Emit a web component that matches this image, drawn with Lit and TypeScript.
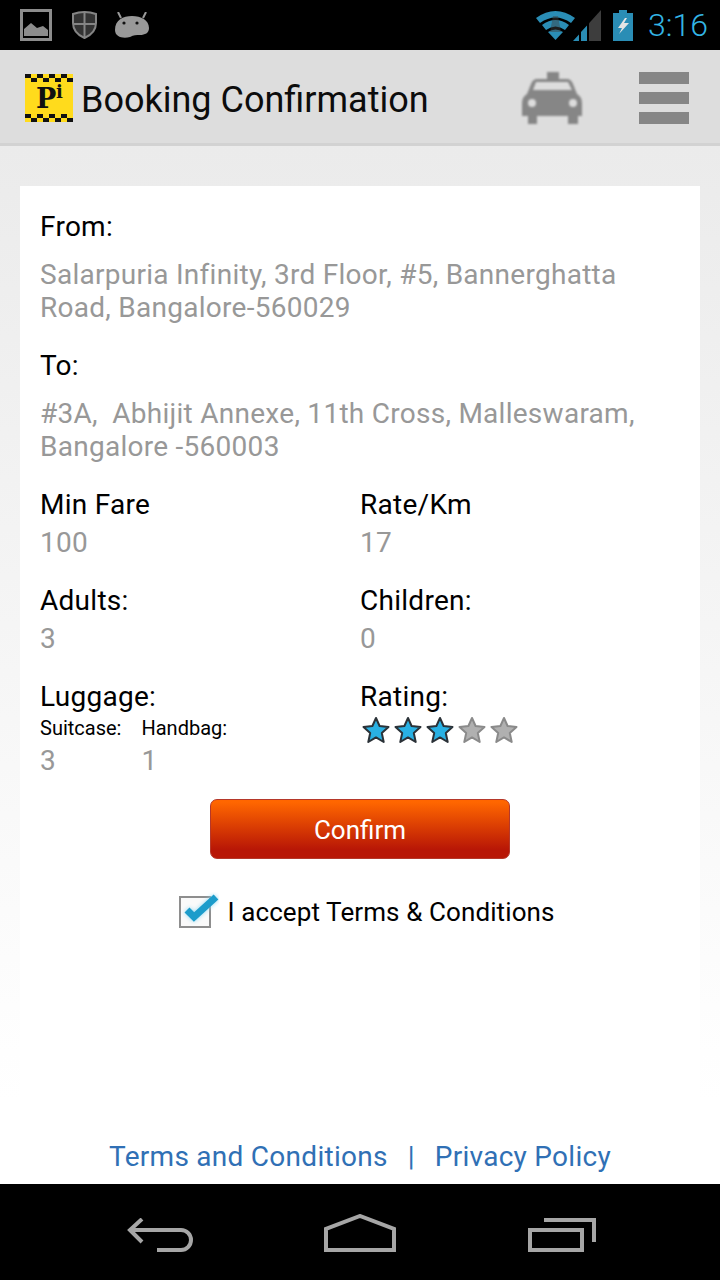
import { LitElement, html, css, svg } from "lit";
import { customElement } from "lit/decorators.js";

const star = (on: boolean) => svg`<svg class="star" viewBox="0 0 30 30" width="30" height="30">
  <path d="M15 3 L18.6 11 L27.5 12 L20.8 18 L22.7 27 L15 22.4 L7.3 27 L9.2 18 L2.5 12 L11.4 11 Z"
    fill="${on ? "#29b1e4" : "#b0b0b0"}" stroke="${on ? "#2b3238" : "#8a8a8a"}" stroke-width="2" stroke-linejoin="round"/>
</svg>`;

// two rows of taxi checks, used at the top and bottom of the logo
const checks = (y: number) =>
  [0, 1, 2, 3, 4, 5, 6, 7].map(
    (i) => svg`<rect x="${i * 6}" y="${i % 2 ? y + 4 : y}" width="6" height="4" fill="#111" />`
  );

@customElement("app-root")
export class AppRoot extends LitElement {
  static styles = css`
    :host {
      display: flex;
      flex-direction: column;
      width: 720px;
      height: 1280px;
      font-family: Roboto, "Liberation Sans", sans-serif;
      color: #000;
      overflow: hidden;
    }
    .status {
      height: 50px;
      background: #000;
      display: flex;
      align-items: center;
      flex: none;
    }
    .status .left {
      display: flex;
      align-items: center;
      padding-left: 20px;
    }
    .shield {
      margin-left: 20px;
    }
    .droid {
      margin-left: 18px;
    }
    .status .right {
      margin-left: auto;
      display: flex;
      align-items: center;
      padding-right: 12px;
    }
    .signal {
      margin-left: -2px;
    }
    .battery {
      margin-left: 12px;
    }
    .clock {
      color: #33b5e5;
      font-size: 32px;
      font-weight: 300;
      line-height: 50px;
      margin-left: 15px;
    }
    .bar {
      box-sizing: border-box;
      height: 96px;
      background: #dddddd;
      border-bottom: 3px solid #d2d2d2;
      display: flex;
      align-items: center;
      flex: none;
      padding: 3px 0 0 25px;
    }
    .title {
      font-size: 36px;
      margin: 4px 0 0 8px;
      color: #0c0c0c;
      white-space: nowrap;
    }
    .bar .taxi {
      margin-left: 93px;
      filter: blur(0.8px);
    }
    .bar .menu {
      margin-left: 57px;
      display: flex;
      flex-direction: column;
      gap: 8px;
    }
    .menu i {
      display: block;
      width: 50px;
      height: 12px;
      background: #868686;
    }
    .main {
      flex: 1;
      background: linear-gradient(#ebebeb, #ffffff 92%);
      padding: 40px 20px 0;
      display: flex;
      flex-direction: column;
      min-height: 0;
    }
    .card {
      background: #fff;
      flex: 1;
      padding: 24px 20px 0;
      display: flex;
      flex-direction: column;
    }
    .label {
      font-size: 28px;
      line-height: 33px;
      letter-spacing: 0.27px;
    }
    .value {
      font-size: 28px;
      line-height: 33px;
      letter-spacing: 0.27px;
      color: #989898;
    }
    .addr {
      margin-top: 15px;
      margin-bottom: 25px;
    }
    .grid {
      display: grid;
      grid-template-columns: 320px 1fr;
    }
    .cell {
      height: 96px;
    }
    .cell .value {
      margin-top: 5px;
    }
    .sub {
      display: flex;
      gap: 20px;
      font-size: 20px;
      line-height: 24px;
      margin-top: 3px;
    }
    .cell .sub .value {
      margin-top: 4px;
    }
    .stars {
      display: flex;
      margin: 2px 0 0 1px;
      gap: 2px;
    }
    .star {
      display: block;
      width: 30px;
      height: 30px;
    }
    .confirm {
      align-self: center;
      width: 300px;
      height: 60px;
      margin-top: 23px;
      box-sizing: border-box;
      border: 1px solid #b5382a;
      border-radius: 7px;
      background: linear-gradient(#ff6600 4%, #b81706 85%);
      color: #fff;
      font: inherit;
      font-size: 26px;
      padding: 2px 0 0;
    }
    .accept {
      align-self: center;
      display: flex;
      align-items: center;
      margin-top: 33px;
      margin-left: 14px;
      font-size: 26px;
      letter-spacing: 0.1px;
      line-height: 40px;
    }
    .check {
      display: block;
      margin-right: 8px;
    }
    .tick {
      filter: drop-shadow(0 0 2px #8fd8f2);
    }
    .links {
      margin-top: auto;
      padding-bottom: 9px;
      display: flex;
      justify-content: center;
      color: #3070b5;
      font-size: 28px;
      letter-spacing: 0.27px;
      line-height: 36px;
      white-space: nowrap;
    }
    .links .sep {
      margin: 0 20px;
    }
    .nav {
      height: 96px;
      background: #000;
      flex: none;
      display: flex;
      align-items: flex-start;
    }
    .nav svg {
      display: block;
      flex: none;
    }
    .back {
      margin: 34px 0 0 127px;
    }
    .home {
      margin: 30px 0 0 131px;
    }
    .recents {
      margin: 34px 0 0 132px;
    }
  `;

  render() {
    return html`
      <div class="status">
        <div class="left">
          <svg width="32" height="32" viewBox="0 0 32 32">
            <rect x="1.5" y="1.5" width="29" height="29" fill="none" stroke="#8c8c8c" stroke-width="3" />
            <path d="M4 27 V20 L11 14 L17 19 L23 17 L28 21 V27 Z" fill="#8c8c8c" />
          </svg>
          <svg class="shield" width="25" height="28" viewBox="0 0 25 28">
            <path d="M1 3 Q12.5 -1 24 3 V12 Q24 22 12.5 27 Q1 22 1 12 Z" fill="#333" stroke="#858585" stroke-width="2" />
            <path d="M12.5 1 V27 M1 13 H24" stroke="#858585" stroke-width="2" />
          </svg>
          <svg class="droid" width="34" height="26" viewBox="0 0 34 26">
            <path d="M3 0 L6 6 M31 0 L28 6" stroke="#999" stroke-width="2" />
            <path d="M0 18 C0 8 8 4 17 4 C26 4 34 8 34 16 C34 21 30 23 25 23 C21 23 19 23 15 25 C8 27 0 25 0 18 Z" fill="#999" />
            <circle cx="9" cy="11" r="1.6" fill="#111" />
            <circle cx="22" cy="11" r="1.6" fill="#111" />
          </svg>
        </div>
        <div class="right">
          <svg width="39" height="30" viewBox="0 0 39 30">
            <path d="M0 8 Q19.5 -6 39 8 L35 13 Q19.5 2 4 13 Z" fill="#2a8db5" />
            <path d="M6 15 Q19.5 5 33 15 L29 20 Q19.5 13 10 20 Z" fill="#2a8db5" />
            <path d="M12 22 Q19.5 17 27 22 L19.5 30 Z" fill="#2a8db5" />
            <path d="M17 6 H22 L25 22 H14 Z" fill="#3d3d3d" opacity="0.45" />
          </svg>
          <svg class="signal" width="28" height="31" viewBox="0 0 28 31">
            <path d="M0 31 L6 24.4 V31 Z M8 22.1 L14 15.5 V31 H8 Z" fill="#2a8db5" />
            <path d="M16 13.3 L28 0 V31 H16 Z" fill="#3d3d3d" />
          </svg>
          <svg class="battery" width="20" height="31" viewBox="0 0 20 31">
            <path d="M6 0 H14 V3 H20 V31 H0 V3 H6 Z" fill="#2a8db5" />
            <path d="M12 8 L5 18 H9 L6 24 L16 13 H11 L14 8 Z" fill="#e4e4e4" />
          </svg>
          <span class="clock">3:16</span>
        </div>
      </div>
      <div class="bar">
        <svg width="48" height="48" viewBox="0 0 48 48">
          <rect width="48" height="48" fill="#ffdb1c" />
          ${checks(0)} ${checks(40)}
          <text x="11" y="34" font-family="DejaVu Serif, serif" font-weight="700" font-size="27" fill="#111">P</text>
          <text x="31" y="24" font-family="DejaVu Serif, serif" font-weight="700" font-size="18" fill="#111">i</text>
        </svg>
        <span class="title">Booking Confirmation</span>
        <svg class="taxi" width="60" height="52" viewBox="0 0 60 52">
          <path d="M25 0 H37 V7 H45 Q49 7 51 12 L55 22 Q60 25 60 31 V44 H56 V52 H46 V44 H15 V52 H6 V44 H0 V31 Q0 25 5 22 L9 12 Q11 7 15 7 H25 Z" fill="#868686" />
          <path d="M11 18 L14 10 H46 L50 18 Z" fill="#dddddd" />
          <circle cx="10" cy="31" r="4" fill="#dddddd" />
          <circle cx="51" cy="31" r="4" fill="#dddddd" />
        </svg>
        <div class="menu"><i></i><i></i><i></i></div>
      </div>
      <div class="main">
        <div class="card">
          <div class="label">From:</div>
          <div class="value addr">Salarpuria Infinity, 3rd Floor, #5, Bannerghatta<br />Road, Bangalore-560029</div>
          <div class="label">To:</div>
          <div class="value addr">#3A,&nbsp; Abhijit Annexe, 11th Cross, Malleswaram,<br />Bangalore -560003</div>
          <div class="grid">
            <div class="cell"><div class="label">Min Fare</div><div class="value">100</div></div>
            <div class="cell"><div class="label">Rate/Km</div><div class="value">17</div></div>
            <div class="cell"><div class="label">Adults:</div><div class="value">3</div></div>
            <div class="cell"><div class="label">Children:</div><div class="value">0</div></div>
            <div class="cell">
              <div class="label">Luggage:</div>
              <div class="sub">
                <div>Suitcase:<div class="value">3</div></div>
                <div>Handbag:<div class="value">1</div></div>
              </div>
            </div>
            <div class="cell">
              <div class="label">Rating:</div>
              <div class="stars">${[true, true, true, false, false].map(star)}</div>
            </div>
          </div>
          <button class="confirm">Confirm</button>
          <div class="accept">
            <svg class="check" width="40" height="40" viewBox="0 0 40 40">
              <rect x="1" y="5" width="30" height="30" fill="#fafafa" stroke="#8e8e8e" stroke-width="2" />
              <path class="tick" d="M8 18 L15 25 L37 5" fill="none" stroke="#1c9ccb" stroke-width="7" />
            </svg>
            I accept Terms &amp; Conditions
          </div>
          <div class="links">
            <span>Terms and Conditions</span><span class="sep">|</span><span>Privacy Policy</span>
          </div>
        </div>
      </div>
      <div class="nav">
        <svg class="back" width="66" height="34" viewBox="0 0 66 34">
          <path d="M15 1 L3 12 L15 24 M3 12 H54 A10 10 0 0 1 54 32 H30" fill="none" stroke="#a6a6a6" stroke-width="4" />
        </svg>
        <svg class="home" width="72" height="38" viewBox="0 0 72 38">
          <path d="M2 36 V15 L36 2 L70 15 V36 Z" fill="none" stroke="#a6a6a6" stroke-width="4" />
        </svg>
        <svg class="recents" width="68" height="34" viewBox="0 0 68 34">
          <rect x="2" y="12" width="52" height="20" fill="none" stroke="#a6a6a6" stroke-width="4" />
          <path d="M16 2 H66 V24" fill="none" stroke="#a6a6a6" stroke-width="4" />
        </svg>
      </div>
    `;
  }
}
